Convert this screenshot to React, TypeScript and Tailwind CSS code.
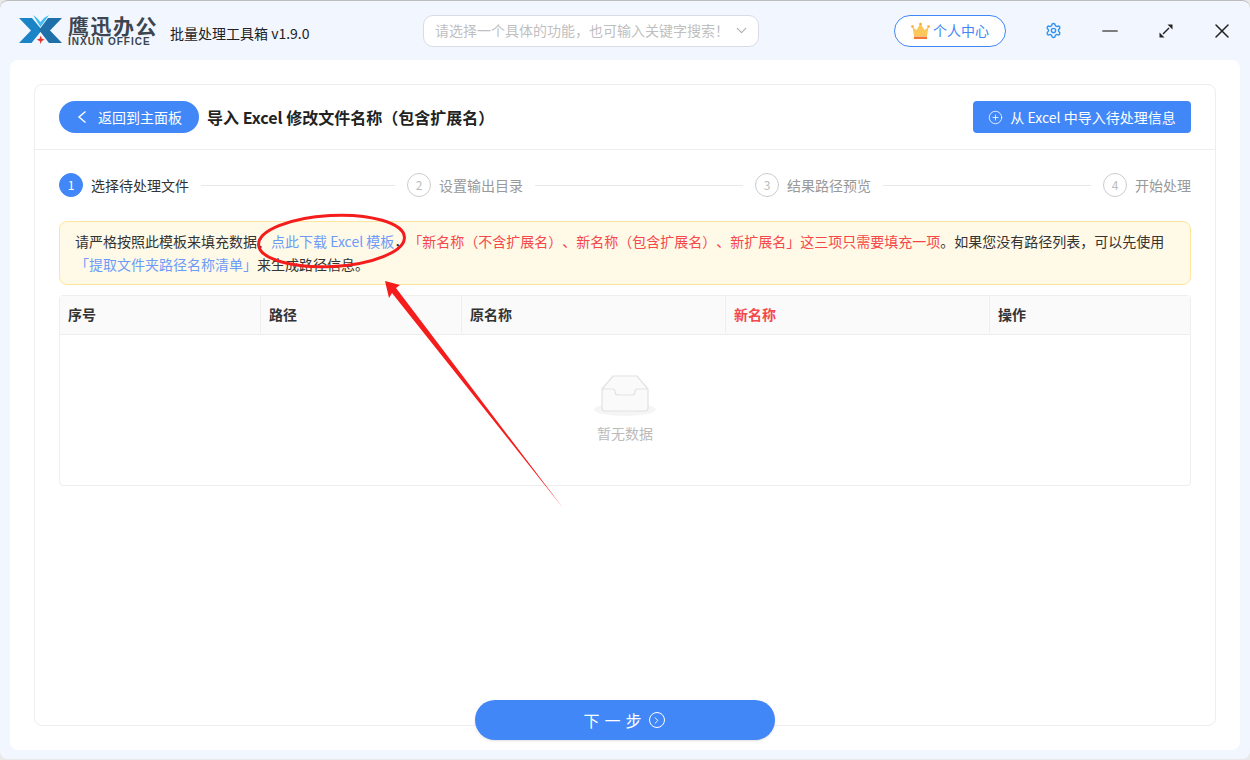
import React from "react";
import { ChevronDown, Settings, Minus, X, CirclePlus, ChevronRight } from "lucide-react";

const font = "[font-family:'Noto_Sans_CJK_SC','Liberation_Sans',sans-serif]";

const steps = [
  { n: 1, label: "选择待处理文件", active: true },
  { n: 2, label: "设置输出目录" },
  { n: 3, label: "结果路径预览" },
  { n: 4, label: "开始处理" },
];

const Logo = () => (
  <svg width="46" height="36" viewBox="0 0 46 36">
    <path d="M1 5H14L24 17 13.5 30H1L13 17.5z" fill="#1a84c7" />
    <path d="M44 5H30L21 17 31 30H44L32 17.5z" fill="#1f6fa8" />
    <path d="M15 2 22.5 14 31 2 26 5 22.5 9 19 5z" fill="#45bdf0" />
    <path d="M22.7 22.5l1 3 3 1.2-3 1.2-1 3-1-3-3-1.2 3-1.2z" fill="#e8342c" />
  </svg>
);

const Crown = () => (
  <svg width="19" height="18" viewBox="0 0 19 18">
    <path d="M1.5 5 5.5 8 9.5 1.5 13.5 8l4-3-1.5 9H3z" fill="#fbc75b" />
    <circle cx="1.5" cy="4.5" r="1.3" fill="#f6a833" />
    <circle cx="17.5" cy="4.5" r="1.3" fill="#f6a833" />
    <circle cx="9.5" cy="2" r="1.3" fill="#f6a833" />
    <rect x="3" y="14.5" width="13" height="2.5" fill="#f4752c" />
  </svg>
);

const Expand = () => (
  <svg width="16" height="16" viewBox="0 0 16 16" fill="none" stroke="#222" strokeWidth="1.4">
    <path d="M5 11 11 5" />
    <path d="M9.500 1.500H14.500V6.500z" fill="#222" stroke="none" />
    <path d="M1.500 9.500V14.500H6.500z" fill="#222" stroke="none" />
  </svg>
);

const Empty = () => (
  <svg width="64" height="42" viewBox="0 0 64 42">
    <ellipse cx="32" cy="34.5" rx="31" ry="6.5" fill="#f5f5f5" />
    <path d="M9 14 20 1h24l11 13v19a3 3 0 0 1-3 3H12a3 3 0 0 1-3-3z" fill="#fafafa" stroke="#e2e2e2" strokeWidth="1.2" />
    <path d="M9 14h11c1.500 0 2 1 2 3s1 3 3 3h14c2 0 3-1 3-3s.5-3 2-3h11" fill="none" stroke="#e2e2e2" strokeWidth="1.2" />
  </svg>
);

export default function App() {
  return (
    <div className={`${font} [text-spacing-trim:space-all] relative h-[760px] w-[1250px] overflow-hidden bg-[#e9e9e9]`}>
      <div className="flex h-[759px] flex-col rounded-lg border-t border-[#bdbdbd] bg-[#f2f6ff]">
        {/* title bar */}
        <div className="flex h-[59px] shrink-0 items-center">
          <div className="ml-[18px] flex w-[405px] items-center">
            <Logo />
            <div className="ml-[4px] flex w-[90px] flex-col text-[#3d4650]">
              <span className="text-[21px] font-bold leading-[22px] tracking-[1.5px]">鹰迅办公</span>
              <span className="mt-px text-[10px] font-bold leading-[10px] tracking-[1px] [font-family:'Liberation_Sans',sans-serif]">INXUN OFFICE</span>
            </div>
            <span className="ml-[12px] mt-[5px] text-[14px] text-[#222]">批量处理工具箱 v1.9.0</span>
          </div>
          <div className="flex h-[32px] w-[336px] items-center justify-between rounded-[10px] border border-[#d9dce3] bg-white pl-[11px] pr-[8px] text-[14px] text-[#bfbfbf]">
            <span>请选择一个具体的功能，也可输入关键字搜索！</span>
            <ChevronDown size={17} color="#aaa" strokeWidth={1.5} />
          </div>
          <div className="ml-[135px] flex h-[32px] w-[112px] items-center justify-center gap-[3px] rounded-full border border-[#4287f8] bg-white text-[14px] text-[#4287f8]">
            <Crown />
            <span>个人中心</span>
          </div>
          <Settings size={17} color="#2f93f5" className="ml-[39px]" />
          <Minus size={24} color="#555" strokeWidth={1.7} className="ml-[36px]" />
          <div className="ml-[36px]"><Expand /></div>
          <X size={24} color="#222" strokeWidth={1.5} className="ml-[36px]" />
        </div>

        {/* main panel */}
        <div className="mx-[10px] flex h-[690px] flex-col rounded-lg bg-white p-6">
          <div className="flex h-[642px] flex-col rounded-lg border border-[#eeeeee]">
            <div className="flex h-[65px] shrink-0 items-center justify-between border-b border-[#eeeeee] px-6">
              <div className="flex items-center">
                <div className="flex h-[32px] w-[140px] items-center rounded-full bg-[#4287f8] pl-[18px] text-[14px] text-white">
                  <svg width="10" height="14" viewBox="0 0 10 14" fill="none" stroke="#fff" strokeWidth="1.4">
                    <path d="M8.500 1.500 2 7l6.500 5.500" />
                  </svg>
                  <span className="ml-[11px]">返回到主面板</span>
                </div>
                <span className="ml-[8px] text-[16px] font-bold text-[#222]">导入 Excel 修改文件名称（包含扩展名）</span>
              </div>
              <div className="flex h-[32px] w-[218px] items-center justify-center gap-[7px] rounded-sm bg-[#4287f8] text-[14px] text-white">
                <CirclePlus size={15} strokeWidth={1.3} />
                <span>从 Excel 中导入待处理信息</span>
              </div>
            </div>

            <div className="flex flex-col px-6">
              {/* stepper */}
              <div className="mt-[22px] flex h-[26px] items-center">
                {steps.map((s, i) => (
                  <div key={s.n} className={i < steps.length - 1 ? "flex flex-1 items-center" : "flex shrink-0 items-center"}>
                    <div className="flex shrink-0 items-center gap-2">
                      <span
                        className={
                          s.active
                            ? "flex h-6 w-6 items-center justify-center rounded-full border border-[#4287f8] bg-[#4287f8] text-xs text-white"
                            : "flex h-6 w-6 items-center justify-center rounded-full border border-[#cccccc] text-xs text-[#bbbbbb]"
                        }
                      >
                        {s.n}
                      </span>
                      <span className={s.active ? "text-[14px] text-[#333]" : "text-[14px] text-[#999]"}>{s.label}</span>
                    </div>
                    {i < steps.length - 1 && <div className="mx-3 h-px flex-1 bg-[#e8e8e8]" />}
                  </div>
                ))}
              </div>

              {/* notice */}
              <div className="mt-[23px] h-[64px] rounded-lg border border-[#fde69a] bg-[#fff9e8] px-[15px] py-[8px] text-[14px] leading-[23px] text-[#333]">
                <span>请严格按照此模板来填充数据：</span>
                <span className="text-[#6d9cf8]">点此下载 Excel 模板</span>
                <span>，</span>
                <span className="text-[#f5484a]">「新名称（不含扩展名）、新名称（包含扩展名）、新扩展名」这三项只需要填充一项</span>
                <span>。如果您没有路径列表，可以先使用</span>
                <br />
                <span className="text-[#6d9cf8]">「提取文件夹路径名称清单」</span>
                <span>来生成路径信息。</span>
              </div>

              {/* table */}
              <div className="mt-[10px] h-[191px] rounded-sm border border-[#eeeeee]">
                <div className="grid h-[39px] grid-cols-[201px_201px_264px_264px_1fr] border-b border-[#eeeeee] bg-[#fafafa] pb-px text-[14px] font-bold text-[#333]">
                  <div className="flex items-center border-r border-[#eeeeee] pl-2">序号</div>
                  <div className="flex items-center border-r border-[#eeeeee] pl-2">路径</div>
                  <div className="flex items-center border-r border-[#eeeeee] pl-2">原名称</div>
                  <div className="flex items-center border-r border-[#eeeeee] pl-2 text-[#f5484a]">新名称</div>
                  <div className="flex items-center pl-2">操作</div>
                </div>
                <div className="flex flex-col items-center pt-[40px]">
                  <Empty />
                  <span className="mt-[6px] text-[14px] text-[#bbbbbb]">暂无数据</span>
                </div>
              </div>
            </div>
          </div>
        </div>
      </div>

      {/* next button sits over the card's edge */}
      <div className="absolute left-[475px] top-[700px] flex h-[40px] w-[300px] items-center justify-center gap-[2px] rounded-full bg-[#4287f8] pr-[2px] text-[16px] tracking-[5px] text-white shadow-sm">
        <span>下一步</span>
        <span className="flex h-4 w-4 items-center justify-center rounded-full border border-white">
          <ChevronRight size={11} />
        </span>
      </div>

      {/* red annotation drawn over the screenshot */}
      <svg className="pointer-events-none absolute left-0 top-0" width="1250" height="760" viewBox="0 0 1250 760" fill="none">
        <ellipse cx="331.500" cy="241" rx="73" ry="25.500" transform="rotate(-3 331.500 241)" stroke="#f51c1c" strokeWidth="3" />
        <path d="M385 281 400 285 396 288 563 508 392 293 389 298z" fill="#f51c1c" />
      </svg>
    </div>
  );
}
